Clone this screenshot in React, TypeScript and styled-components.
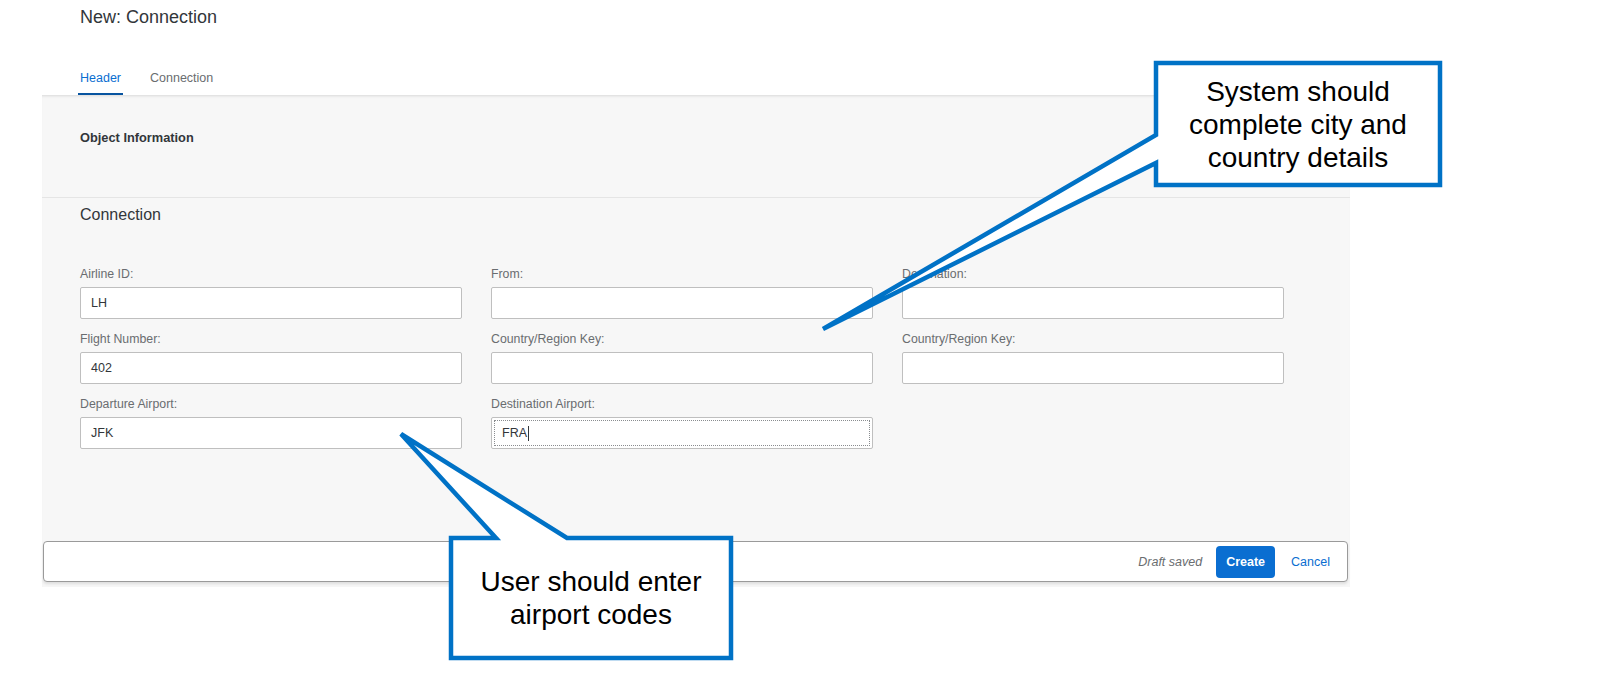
import React from 'react';
import styled, { createGlobalStyle } from 'styled-components';

const GlobalStyle = createGlobalStyle`
  html, body { margin: 0; padding: 0; background: #ffffff; }
  body { font-family: "Liberation Sans", Arial, sans-serif; }
  * { box-sizing: border-box; }
`;

const Page = styled.div`
  position: relative;
  width: 1600px;
  height: 674px;
  overflow: hidden;
  background: #ffffff;
`;

const Shell = styled.div`
  width: 1308px;
  margin-left: 42px;
  display: flex;
  flex-direction: column;
`;

const Title = styled.h1`
  margin: 0;
  padding: 5px 0 0 38px;
  font-size: 18px;
  line-height: 24px;
  font-weight: 400;
  color: #32363a;
`;

const TabBar = styled.div`
  display: flex;
  gap: 25px;
  padding: 41px 0 0 36px;
  background: #ffffff;
`;

const Tab = styled.div<{ $active?: boolean }>`
  padding: 0 2px 7px;
  font-size: 12.5px;
  line-height: 16px;
  color: ${(p) => (p.$active ? '#0a6ed1' : '#6a6d70')};
  border-bottom: 2px solid ${(p) => (p.$active ? '#0854a0' : 'transparent')};
`;

const Panel = styled.div`
  display: flex;
  flex-direction: column;
  background: #f7f7f7;
  box-shadow: inset 0 3px 3px -2px rgba(0, 0, 0, 0.12);
`;

const ObjectSection = styled.section`
  padding: 35px 0 51px 38px;
  border-bottom: 1px solid #e5e5e5;
`;

const SubTitle = styled.div`
  font-size: 12.8px;
  line-height: 16px;
  font-weight: 700;
  color: #32363a;
`;

const ConnectionSection = styled.section`
  padding: 7px 0 0 38px;
`;

const SectionHeading = styled.h2`
  margin: 0;
  font-size: 16px;
  line-height: 20px;
  font-weight: 400;
  color: #32363a;
`;

const FormGrid = styled.div`
  margin-top: 41px;
  display: grid;
  grid-template-columns: repeat(3, 382px);
  column-gap: 29px;
  row-gap: 12px;
`;

const Field = styled.div`
  display: flex;
  flex-direction: column;
  gap: 5px;
`;

const Label = styled.label`
  font-size: 12.3px;
  line-height: 16px;
  color: #6a6d70;
  white-space: nowrap;
`;

const InputBox = styled.div<{ $focused?: boolean }>`
  height: 32px;
  display: flex;
  align-items: center;
  padding: 0 10px;
  background: #ffffff;
  border: 1px solid #bfbfbf;
  border-radius: 2px;
  font-size: 12.5px;
  color: #32363a;
  outline: ${(p) => (p.$focused ? '1px dotted #8a8d90' : 'none')};
  outline-offset: -4px;
`;

const Caret = styled.span`
  display: inline-block;
  width: 1px;
  height: 15px;
  margin-left: 1px;
  background: #32363a;
`;

const Footer = styled.div`
  height: 41px;
  margin: 92px 2px 5px 1px;
  display: flex;
  align-items: center;
  justify-content: flex-end;
  padding: 1px 7px 0 0;
  background: #ffffff;
  border: 1px solid #9a9a9a;
  border-radius: 4px;
  box-shadow: 0 2px 3px rgba(0, 0, 0, 0.1);
`;

const DraftText = styled.span`
  font-size: 12.5px;
  font-style: italic;
  color: #6a6d70;
  margin-right: 14px;
`;

const Button = styled.button<{ $primary?: boolean }>`
  height: 32px;
  padding: 0 10px;
  margin-left: ${(p) => (p.$primary ? '0' : '6px')};
  border: none;
  border-radius: 4px;
  font-family: inherit;
  font-size: 12.5px;
  font-weight: ${(p) => (p.$primary ? 700 : 400)};
  color: ${(p) => (p.$primary ? '#ffffff' : '#0a6ed1')};
  background: ${(p) => (p.$primary ? '#0a6ed1' : 'transparent')};
`;

const Overlay = styled.svg`
  position: absolute;
  left: 0;
  top: 0;
  z-index: 2;
  pointer-events: none;
`;

const CalloutText = styled.div<{ $x: number; $y: number; $w: number; $h: number }>`
  position: absolute;
  z-index: 3;
  left: ${(p) => p.$x}px;
  top: ${(p) => p.$y}px;
  width: ${(p) => p.$w}px;
  height: ${(p) => p.$h}px;
  display: flex;
  align-items: center;
  justify-content: center;
  text-align: center;
  font-family: "Liberation Sans", Arial, sans-serif;
  font-size: 28px;
  line-height: 33px;
  color: #000000;
`;

type FieldDef = { label: string; value?: string; focused?: boolean } | null;

const fields: FieldDef[] = [
  { label: 'Airline ID:', value: 'LH' },
  { label: 'From:' },
  { label: 'Destination:' },
  { label: 'Flight Number:', value: '402' },
  { label: 'Country/Region Key:' },
  { label: 'Country/Region Key:' },
  { label: 'Departure Airport:', value: 'JFK' },
  { label: 'Destination Airport:', value: 'FRA', focused: true },
  null,
];

export default function App() {
  return (
    <>
      <GlobalStyle />
      <Page>
        <Shell>
          <Title>New: Connection</Title>
          <TabBar>
            <Tab $active>Header</Tab>
            <Tab>Connection</Tab>
          </TabBar>
          <Panel>
            <ObjectSection>
              <SubTitle>Object Information</SubTitle>
            </ObjectSection>
            <ConnectionSection>
              <SectionHeading>Connection</SectionHeading>
              <FormGrid>
                {fields.map((f, i) =>
                  f ? (
                    <Field key={i}>
                      <Label>{f.label}</Label>
                      <InputBox $focused={f.focused}>
                        {f.value}
                        {f.focused && <Caret />}
                      </InputBox>
                    </Field>
                  ) : (
                    <div key={i} />
                  )
                )}
              </FormGrid>
            </ConnectionSection>
            <Footer>
              <DraftText>Draft saved</DraftText>
              <Button $primary>Create</Button>
              <Button>Cancel</Button>
            </Footer>
          </Panel>
        </Shell>

        <Overlay width="1600" height="674" viewBox="0 0 1600 674">
          <polygon
            points="1156,63 1440,63 1440,185 1156,185 1156,163 823,329 1156,135"
            fill="#ffffff"
            stroke="#0072c6"
            strokeWidth="4.5"
          />
          <polygon
            points="451,538 496,538 401,434 567,538 731,538 731,658 451,658"
            fill="#ffffff"
            stroke="#0072c6"
            strokeWidth="4.5"
          />
        </Overlay>
        <CalloutText $x={1158} $y={65} $w={280} $h={118}>
          System should
          <br />
          complete city and
          <br />
          country details
        </CalloutText>
        <CalloutText $x={453} $y={540} $w={276} $h={116}>
          User should enter
          <br />
          airport codes
        </CalloutText>
      </Page>
    </>
  );
}
